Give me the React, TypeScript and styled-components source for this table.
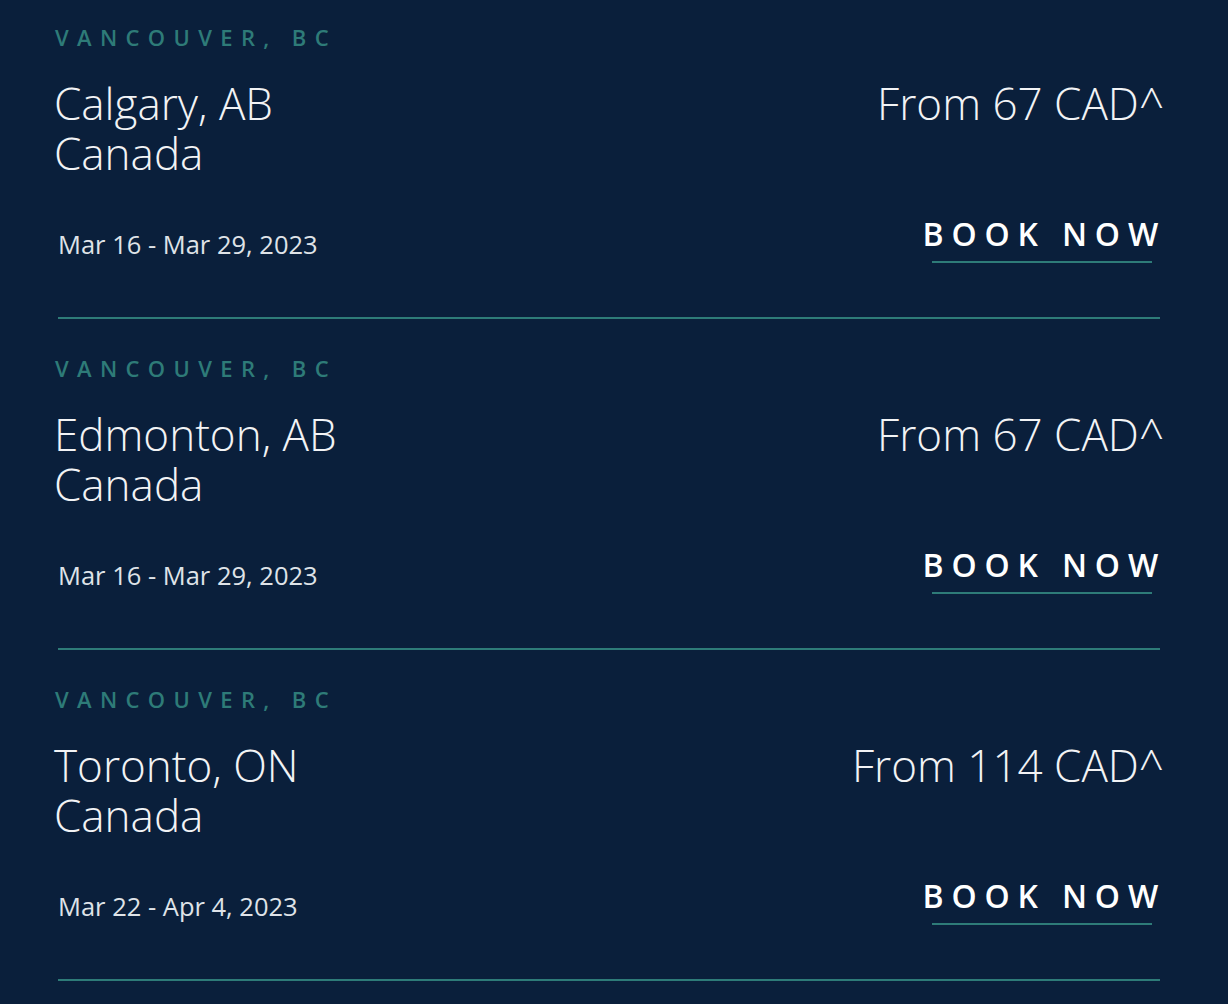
import React from "react";
import styled, { createGlobalStyle } from "styled-components";

const GlobalStyle = createGlobalStyle`
  html, body {
    margin: 0;
    padding: 0;
    background: #0a1f3b;
    overflow: hidden;
  }
  body {
    font-family: "Open Sans", "Noto Sans", sans-serif;
    -webkit-font-smoothing: antialiased;
  }
`;

const Page = styled.main`
  background: #0a1f3b;
  min-height: 1004px;
  padding: 22px 62px 0 52px;
  box-sizing: border-box;
`;

const Card = styled.article`
  display: flex;
  flex-direction: column;
`;

const Origin = styled.div`
  font-size: 22px;
  line-height: 30px;
  font-weight: 600;
  letter-spacing: 0.38em;
  color: #2e7b78;
  text-transform: uppercase;
  padding-left: 3px;
`;

const MainRow = styled.div`
  margin-top: 26px;
  display: flex;
  justify-content: space-between;
  align-items: flex-start;
`;

const City = styled.h3`
  margin: 0;
  padding-left: 2px;
  font-size: 44px;
  line-height: 50px;
  font-weight: 300;
  color: #f2f3f5;
`;

const Price = styled.div`
  padding-right: 2px;
  font-size: 44px;
  line-height: 50px;
  font-weight: 300;
  color: #f2f3f5;
  text-align: right;
`;

const Footer = styled.div`
  margin-top: 36px;
  display: flex;
  justify-content: space-between;
  align-items: flex-start;
`;

const Dates = styled.div`
  margin-top: 14px;
  padding-left: 6px;
  font-size: 25.5px;
  line-height: 32px;
  font-weight: 400;
  color: #dfe3e8;
`;

const BookNow = styled.a`
  display: flex;
  flex-direction: column;
  text-decoration: none;
  cursor: pointer;
`;

const BookLabel = styled.span`
  font-size: 32px;
  line-height: 40px;
  font-weight: 600;
  letter-spacing: 0.245em;
  color: #ffffff;
`;

const Underline = styled.span`
  display: block;
  height: 2px;
  margin: 7px 14px 0 9px;
  background: #2e7b78;
`;

const Divider = styled.hr`
  border: 0;
  height: 2px;
  background: #2e7b78;
  margin: 54px 6px 34px 6px;
`;

type Route = {
  origin: string;
  city: string;
  country: string;
  price: string;
  dates: string;
};

const routes: Route[] = [
  { origin: "Vancouver, BC", city: "Calgary, AB", country: "Canada", price: "From 67 CAD^", dates: "Mar 16 - Mar 29, 2023" },
  { origin: "Vancouver, BC", city: "Edmonton, AB", country: "Canada", price: "From 67 CAD^", dates: "Mar 16 - Mar 29, 2023" },
  { origin: "Vancouver, BC", city: "Toronto, ON", country: "Canada", price: "From 114 CAD^", dates: "Mar 22 - Apr 4, 2023" },
];

export default function App() {
  return (
    <>
      <GlobalStyle />
      <Page>
        {routes.map((r, i) => (
          <Card key={i}>
            <Origin>{r.origin}</Origin>
            <MainRow>
              <City>
                {r.city}
                <br />
                {r.country}
              </City>
              <Price>{r.price}</Price>
            </MainRow>
            <Footer>
              <Dates>{r.dates}</Dates>
              <BookNow href="#">
                <BookLabel>BOOK NOW</BookLabel>
                <Underline />
              </BookNow>
            </Footer>
            <Divider />
          </Card>
        ))}
      </Page>
    </>
  );
}
